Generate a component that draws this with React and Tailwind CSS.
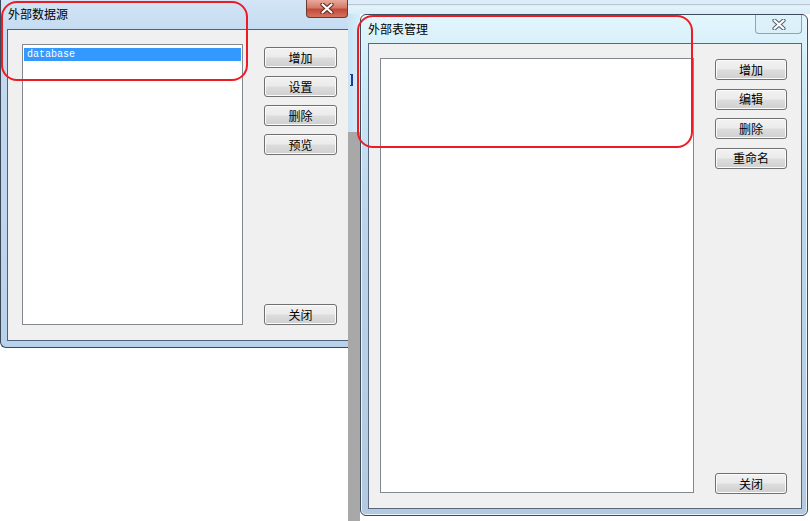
import React from 'react';

const cjk = { fontFamily: '"Noto Sans CJK SC", "Noto Sans", sans-serif' };

function Btn({ label, className = '' }) {
  return (
    <div
      className={`flex h-[21px] items-center justify-center rounded-[3px] border border-[#707070] bg-[linear-gradient(to_bottom,#f2f2f2_0%,#ebebeb_48%,#dddddd_52%,#cfcfcf_100%)] text-[12px] leading-none text-black shadow-[inset_0_0_0_1px_#fbfbfb] ${className}`}
      style={cjk}
    >
      {label}
    </div>
  );
}

function CloseX({ color, outline }) {
  return (
    <svg width="14" height="11" viewBox="0 0 14 11">
      <path d="M2.5 1.5 L11.5 9.5 M11.5 1.5 L2.5 9.5" stroke={outline} strokeWidth="4.2" strokeLinecap="round" />
      <path d="M2.5 1.5 L11.5 9.5 M11.5 1.5 L2.5 9.5" stroke={color} strokeWidth="2.2" strokeLinecap="round" />
    </svg>
  );
}

function SourceDialog() {
  return (
    <div className="flex h-[348px] w-[356px] flex-col rounded-bl-[6px] border-b border-l border-[#3b4656] bg-[linear-gradient(to_bottom,#d3e5f6_0%,#c3daf0_10%,#b9d2eb_100%)]">
      <div className="flex h-[29px] shrink-0 items-start">
        <div className="pl-[7px] pt-[6px] text-[12px] leading-[16px] text-black" style={cjk}>
          外部数据源
        </div>
        <div className="ml-auto mr-[8px] flex h-[18px] w-[42px] items-center justify-center rounded-b-[4px] border border-t-0 border-[#6b3a33] bg-[linear-gradient(to_bottom,#e9a99b_0%,#d47a6a_45%,#c34a38_55%,#d5735f_100%)]">
          <CloseX color="#ffffff" outline="#5a2a22" />
        </div>
      </div>
      <div className="mb-[6px] ml-[6px] flex flex-1 border border-[#50607a] bg-[#f0f0f0] pl-[14px] pt-[14px]">
        <div className="flex h-[281px] w-[221px] shrink-0 flex-col border border-[#828790] bg-white px-[1px] pt-[3px]">
          <div
            className="flex h-[13px] items-center bg-[#3399ff] pl-[3px] pt-[1px] text-[10px] leading-none text-white"
            style={{ fontFamily: '"Liberation Mono", monospace' }}
          >
            database
          </div>
        </div>
        <div className="ml-[21px] flex h-[281px] w-[73px] flex-col gap-[8px] pt-[3px]">
          <Btn label="增加" />
          <Btn label="设置" />
          <Btn label="删除" />
          <Btn label="预览" />
          <Btn label="关闭" className="mt-auto" />
        </div>
      </div>
    </div>
  );
}

function TableDialog() {
  return (
    <div className="flex h-[502px] w-[448px] flex-col rounded-[6px] border border-[#3f4b5c] bg-[linear-gradient(to_bottom,#e3f6fd_0%,#cdeaf7_12%,#bcd5ea_40%,#b3c9df_100%)] shadow-[inset_0_0_0_1px_#e9f4fb]">
      <div className="flex h-[28px] shrink-0 items-start">
        <div className="pl-[7px] pt-[6px] text-[12px] leading-[16px] text-black" style={cjk}>
          外部表管理
        </div>
        <div className="ml-auto mr-[5px] flex h-[19px] w-[47px] items-center justify-center rounded-b-[4px] border border-t-0 border-[#8ea4ba] bg-[#d9eef8]/60">
          <CloseX color="#ffffff" outline="#55606d" />
        </div>
      </div>
      <div className="mb-[6px] ml-[7px] mr-[5px] flex flex-1 border border-[#56677e] bg-[#f0f0f0] pl-[11px] pt-[14px]">
        <div className="h-[435px] w-[314px] shrink-0 border border-[#828790] bg-white" />
        <div className="ml-[21px] flex h-[436px] w-[72px] flex-col gap-[8.5px] pt-[1px]">
          <Btn label="增加" />
          <Btn label="编辑" />
          <Btn label="删除" />
          <Btn label="重命名" />
          <Btn label="关闭" className="mt-auto" />
        </div>
      </div>
    </div>
  );
}

export default function App() {
  return (
    <div className="relative flex h-[521px] w-[810px] overflow-hidden bg-white">
      <div className="w-[348px] shrink-0 overflow-hidden">
        <SourceDialog />
      </div>

      <div className="flex w-[462px] flex-col">
        <div className="h-[14px] shrink-0 bg-[linear-gradient(to_bottom,#dcecf8_0%,#dcecf8_30%,#9aa8b6_34%,#e6f3fb_40%,#d6eef9_100%)]" />
        <div className="flex">
          <div className="flex w-[12px] shrink-0 flex-col">
            <div className="relative h-[118px] bg-[linear-gradient(to_right,#c8e2f4,#d9effa)]">
              <span className="absolute left-[2px] top-[60px] h-[12px] w-[3px] border-b border-r-2 border-t border-[#1b3a9a]" />
            </div>
            <div className="h-[390px] bg-[#a8a8a8]" />
          </div>
          <TableDialog />
        </div>
      </div>

      <div className="pointer-events-none absolute left-[1px] top-[1px] h-[80px] w-[247px] rounded-[16px] border-[2.5px] border-[#ed1c24]" />
      <div className="pointer-events-none absolute left-[357px] top-[15px] h-[133px] w-[336px] rounded-[16px] border-[2.5px] border-[#ed1c24]" />
    </div>
  );
}
